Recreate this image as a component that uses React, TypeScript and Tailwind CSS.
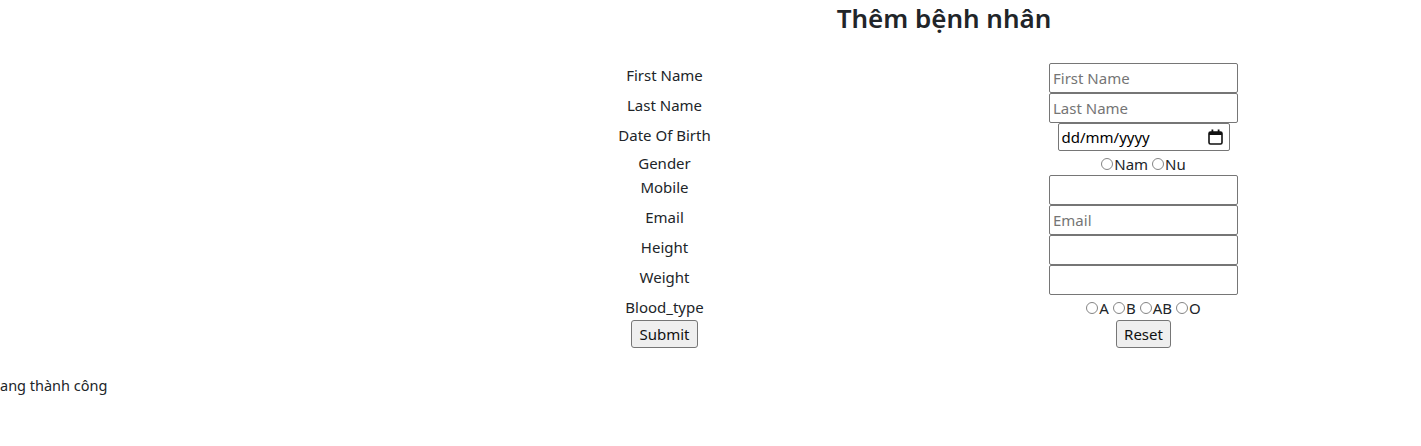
import React from 'react';

const font = { fontFamily: '"Noto Sans", "Open Sans", sans-serif' };

const TextBox: React.FC<{ placeholder?: string }> = ({ placeholder }) => (
  <div className="flex h-[30px] w-[189px] items-center rounded-[2px] border border-[#767676] bg-white px-[3px] text-[15px] text-[#757575]">
    {placeholder}
  </div>
);

const Radio: React.FC<{ label: string }> = ({ label }) => (
  <span className="inline-flex items-center">
    <span className="mr-[1px] inline-block h-[12px] w-[12px] rounded-full border border-[#858585] bg-white" />
    {label}
  </span>
);

const CalendarIcon = () => (
  <svg width="15" height="16" viewBox="0 0 15 16" fill="none">
    <rect x="1" y="3" width="13" height="12" rx="1.5" stroke="#111" strokeWidth="1.6" />
    <rect x="1" y="3" width="13" height="3" fill="#111" />
    <rect x="3.5" y="0.5" width="1.8" height="3" fill="#111" />
    <rect x="9.7" y="0.5" width="1.8" height="3" fill="#111" />
  </svg>
);

const Button: React.FC<{ label: string }> = ({ label }) => (
  <button className="mt-[1px] h-[28px] rounded-[3px] border border-[#767676] bg-[#efefef] px-[7px] text-[15px] text-[#111]">
    {label}
  </button>
);

type Row = { label: string; h: string; field: React.ReactNode };

const rows: Row[] = [
  { label: 'First Name', h: 'h-[30px]', field: <TextBox placeholder="First Name" /> },
  { label: 'Last Name', h: 'h-[30px]', field: <TextBox placeholder="Last Name" /> },
  {
    label: 'Date Of Birth',
    h: 'h-[28px]',
    field: (
      <div className="flex h-[28px] w-[172px] items-center justify-between rounded-[2px] border border-[#767676] pl-[3px] pr-[6px] text-[15px] text-black">
        <span>dd/mm/yyyy</span>
        <CalendarIcon />
      </div>
    ),
  },
  {
    label: 'Gender',
    h: 'h-[24px]',
    field: (
      <div className="flex gap-[4px] pt-[1px] text-[15px] leading-[22px]">
        <Radio label="Nam" />
        <Radio label="Nu" />
      </div>
    ),
  },
  { label: 'Mobile', h: 'h-[30px]', field: <TextBox /> },
  { label: 'Email', h: 'h-[30px]', field: <TextBox placeholder="Email" /> },
  { label: 'Height', h: 'h-[30px]', field: <TextBox /> },
  { label: 'Weight', h: 'h-[30px]', field: <TextBox /> },
  {
    label: 'Blood_type',
    h: 'h-[24px]',
    field: (
      <div className="flex gap-[4px] pt-[1px] text-[15px] leading-[22px]">
        <Radio label="A" />
        <Radio label="B" />
        <Radio label="AB" />
        <Radio label="O" />
      </div>
    ),
  },
];

export default function App() {
  return (
    <div className="min-h-[446px] bg-white text-[15px] text-[#212529]" style={font}>
      <h2 className="pl-[467px] pt-[1px] text-center text-[26px] font-semibold leading-[34px]">
        Thêm bệnh nhân
      </h2>
      <form className="ml-[425px] mt-[28px] w-[958px]">
        {rows.map((r) => (
          <div key={r.label} className={`grid grid-cols-2 ${r.h}`}>
            <div className="pt-[1px] text-center leading-[22px]">{r.label}</div>
            <div className="flex justify-center">{r.field}</div>
          </div>
        ))}
        <div className="grid h-[30px] grid-cols-2">
          <div className="flex justify-center">
            <Button label="Submit" />
          </div>
          <div className="flex justify-center">
            <Button label="Reset" />
          </div>
        </div>
      </form>
      <p className="mt-[25px] text-[14.5px] leading-[22px]">ang thành công</p>
    </div>
  );
}
